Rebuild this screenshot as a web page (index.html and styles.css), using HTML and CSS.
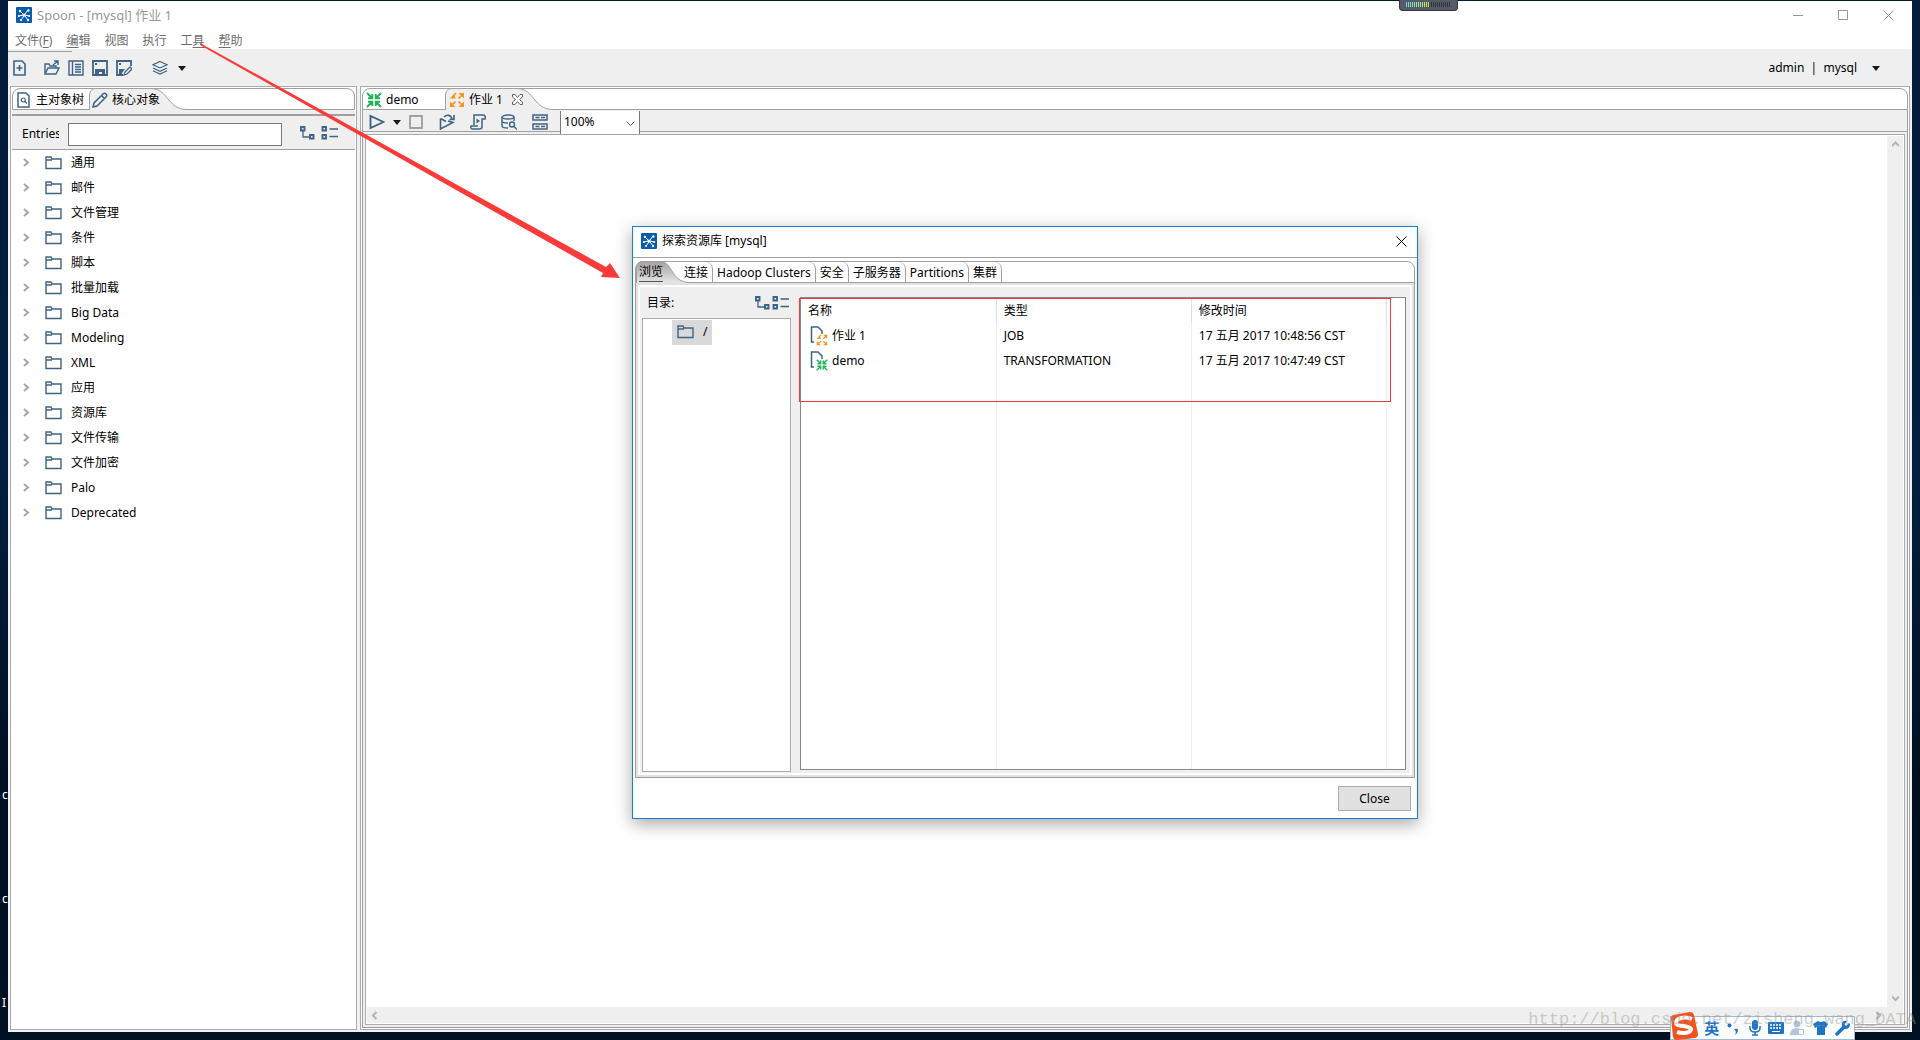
FILE: index.html
```
<!DOCTYPE html>
<html lang="zh-CN">
<head>
<meta charset="utf-8">
<title>Spoon - [mysql] 作业 1</title>
<link rel="stylesheet" href="styles.css">
</head>
<body>
<svg class="sprite" aria-hidden="true">
  <symbol id="logo" viewBox="0 0 16 16"><rect width="16" height="16" rx="1" fill="#0a5cab"/><g stroke="#fff" stroke-width="1" fill="none"><path d="M4 4l3 3M12 3L9 7M3 9l4-1M13 9l-4-1M5 13l3-4M12 13L9 9"/></g><g fill="#fff"><circle cx="8" cy="8" r="1.600"/><circle cx="4" cy="4" r="1.2"/><circle cx="12.300" cy="3.500" r="1.200"/><circle cx="2.800" cy="9" r="1"/><circle cx="13.200" cy="9" r="1"/><circle cx="5" cy="13" r="1.100"/><circle cx="12" cy="13" r="1.200"/></g></symbol>
  <symbol id="folder" viewBox="0 0 17 14"><path d="M1 12.500V1h5l1 2h9v9.500z M1 4h6" fill="none" stroke="#3f6384" stroke-width="1.400"/></symbol>
  <symbol id="chev" viewBox="0 0 7 9"><path d="M1 1l4 3.500-4 3.500" fill="none" stroke="#a6a6a6" stroke-width="2"/></symbol>
  <symbol id="caret" viewBox="0 0 8 5"><path d="M0 0h8L4 5z" fill="#1a1a1a"/></symbol>
  <symbol id="new" viewBox="0 0 16 16"><path d="M2 1h8l3 3v11H2z M7.500 5v6 M4.500 8h6" fill="none" stroke="#3f6384" stroke-width="1.600"/></symbol>
  <symbol id="open" viewBox="0 0 16 16"><path d="M1 14V4h4l1 2h6v2 M1 14l3-6h11l-3 6z M9 5l5-4 M10 1h4v4" fill="none" stroke="#3f6384" stroke-width="1.400"/></symbol>
  <symbol id="list" viewBox="0 0 16 16"><path d="M1 1h14v14H1z M4.500 1v14 M7 4.500h6 M7 7h6 M7 9.500h6 M7 12h6" fill="none" stroke="#3f6384" stroke-width="1.400"/></symbol>
  <symbol id="save" viewBox="0 0 16 16"><path d="M1 1h14v14H1z" fill="none" stroke="#3f6384" stroke-width="1.800"/><path d="M3 9h10v6h-3v-3H7v3H3z M3 3h2v2H3z" fill="#3f6384"/></symbol>
  <symbol id="saveas" viewBox="0 0 16 16"><path d="M7 15H1V1h14v5" fill="none" stroke="#3f6384" stroke-width="1.800"/><path d="M3 9h6l-3 4v2H3z M3 3h2v2H3z" fill="#3f6384"/><path d="M8 15l1-3 5-5 2 2-5 5z" fill="#efefef" stroke="#3f6384" stroke-width="1.300"/></symbol>
  <symbol id="layers" viewBox="0 0 17 16"><path d="M8.500 1l7.500 3.500-7.500 3.500L1 4.500z M1 8l7.500 3.500L16 8 M1 11l7.500 3.500L16 11" fill="none" stroke="#3f6384" stroke-width="1.200"/></symbol>
  <symbol id="docsearch" viewBox="0 0 16 16"><path d="M2 1h8l3 3v11H2z" fill="none" stroke="#3f6384" stroke-width="1.500"/><circle cx="7.300" cy="8" r="2" fill="none" stroke="#3f6384" stroke-width="1.200"/><path d="M9 9.500l2 2" stroke="#3f6384" stroke-width="1.200"/></symbol>
  <symbol id="pencil" viewBox="0 0 16 16"><path d="M1 15l1-4 9-9c1-1 2-1 3 0s1 2 0 3l-9 9z M9.500 3.500l3 3" fill="none" stroke="#3f6384" stroke-width="1.500"/></symbol>
  <symbol id="expand" viewBox="0 0 15 14"><path d="M1 1h3.500v3.500H1z M10 9h3.500v3.500H10z" fill="none" stroke="#3f6384" stroke-width="1.900"/><path d="M3 5v6h6" fill="none" stroke="#3f6384" stroke-width="1.300"/></symbol>
  <symbol id="collapse" viewBox="0 0 17 14"><path d="M1.500 1H5v3.500H1.500z M1.500 9H5v3.500H1.500z" fill="none" stroke="#3f6384" stroke-width="1.900"/><path d="M8.500 3H17M8.500 10.500H17" stroke="#3f6384" stroke-width="1.300"/></symbol>
  <symbol id="trans" viewBox="0 0 16 16"><g fill="none" stroke="#1fb25a" stroke-width="1.900"><path d="M1 1l5 5M6.300 2v4.300H2 M15 1l-5 5M9.700 2v4.300H14 M1 15l5-5M6.300 14V9.700H2 M15 15l-5-5M9.700 14V9.700H14"/></g></symbol>
  <symbol id="job" viewBox="0 0 16 16"><g fill="#f7941d"><path d="M9.500 1H15v5.500z M15 9.500V15H9.500z M6.500 15H1V9.500z M1 6.500L5 2l1.500 4.500z"/></g><path d="M4 4.500L7 1 M9.500 6.500L13 3 M9.500 9.500L13 13 M6.500 9.500L3 13" fill="none" stroke="#f7941d" stroke-width="1.700"/></symbol>
  <symbol id="play" viewBox="0 0 16 16"><path d="M1.500 2v12L14.500 8z" fill="none" stroke="#3f6384" stroke-width="1.900"/></symbol>
  <symbol id="stop" viewBox="0 0 16 16"><path d="M2 2h12v12H2z" fill="none" stroke="#a0a0a0" stroke-width="1.900"/></symbol>
  <symbol id="replay" viewBox="0 0 16 16"><path d="M1.500 4.500V15L14 8.500l-5-1.500 M1.500 4.500L7 7.500 M5 3c3-3 7-2 8 2 M15 1v4.500h-4.500" fill="none" stroke="#3f6384" stroke-width="1.600"/></symbol>
  <symbol id="script" viewBox="0 0 16 16"><path d="M4 11V1h10c1 0 1.500 2 1 4h-3v8c0 2-2 2-3 2H2c-1 0-1.500-2-1-3h7" fill="none" stroke="#3f6384" stroke-width="1.500"/><path d="M6.500 4.500v5L10 7z" fill="#3f6384"/></symbol>
  <symbol id="db" viewBox="0 0 16 16"><g fill="none" stroke="#3f6384" stroke-width="1.400"><ellipse cx="7" cy="3" rx="6" ry="2"/><path d="M1 3v9c0 2 3 2 6 2 M13 3v4 M1 7c0 2 4 2 6 2"/><circle cx="11" cy="10.500" r="2.500"/><path d="M13 12.500l3 3"/></g></symbol>
  <symbol id="grid" viewBox="0 0 16 16"><path d="M1 1h14v5H1z M1 10h14v5H1z" fill="none" stroke="#3f6384" stroke-width="1.500"/><path d="M3.500 3.500h4M9 3.500h4M3.500 12.500h4M9 12.500h4" stroke="#3f6384" stroke-width="1.300"/></symbol>
  <symbol id="doc" viewBox="0 0 18 20"><path d="M4 16H1.500V1H8l4 4v3" fill="none" stroke="#3f6384" stroke-width="1.500"/></symbol>
</svg>

<div class="desktop-text"><span>c</span><span>c</span><span>I</span></div>

<main class="window">
  <header class="titlebar">
    <svg class="i16"><use href="#logo"/></svg>
    <h1>Spoon - [mysql] 作业 1</h1>
    <div class="winbtns">
      <button aria-label="最小化"><svg width="11" height="11"><path d="M0 5.500h10" stroke="#999"/></svg></button>
      <button aria-label="最大化"><svg width="11" height="11"><path d="M.5.5h9v9h-9z" fill="none" stroke="#999"/></svg></button>
      <button aria-label="关闭"><svg width="11" height="11"><path d="M.5.5l10 10M10.500.5l-10 10" stroke="#999"/></svg></button>
    </div>
  </header>
  <nav class="menubar">
    <button>文件(<u>F</u>)</button><button><u>编</u>辑</button><button>视图</button><button>执行</button><button>工<u>具</u></button><button><u>帮</u>助</button>
  </nav>
  <div class="toolbar">
    <button aria-label="新建"><svg class="i16"><use href="#new"/></svg></button>
    <button class="after" aria-label="打开"><svg class="i16"><use href="#open"/></svg></button>
    <button aria-label="探索资源库"><svg class="i16"><use href="#list"/></svg></button>
    <button aria-label="保存"><svg class="i16"><use href="#save"/></svg></button>
    <button aria-label="另存为"><svg class="i16"><use href="#saveas"/></svg></button>
    <button class="layers" aria-label="视角"><svg class="i16"><use href="#layers"/></svg><svg class="caret"><use href="#caret"/></svg></button>
    <button class="user">admin&nbsp; |&nbsp; mysql<svg class="caret"><use href="#caret"/></svg></button>
  </div>

  <div class="panels">
    <aside class="side">
      <div class="tabbar">
        <button class="tab tree-tab"><svg class="i16"><use href="#docsearch"/></svg>主对象树</button>
        <button class="tab active core-tab"><svg class="shape" width="98" height="22"><path class="fill" d="M0 22V7Q1 1 6 .5H62C80 1 78 21.500 98 21.500V22z"/><path class="line" d="M.5 22V7Q1 1 6 .5H62C80 1 78 21.500 98 21.500"/></svg><svg class="i16"><use href="#pencil"/></svg>核心对象</button>
      </div>
      <div class="filter">
        <label for="entries">Entries</label>
        <input id="entries" type="text">
        <button aria-label="展开"><svg class="exp"><use href="#expand"/></svg></button>
        <button aria-label="折叠"><svg class="col"><use href="#collapse"/></svg></button>
      </div>
      <ul class="tree">
        <li><svg class="chev"><use href="#chev"/></svg><svg class="folder"><use href="#folder"/></svg>通用</li>
        <li><svg class="chev"><use href="#chev"/></svg><svg class="folder"><use href="#folder"/></svg>邮件</li>
        <li><svg class="chev"><use href="#chev"/></svg><svg class="folder"><use href="#folder"/></svg>文件管理</li>
        <li><svg class="chev"><use href="#chev"/></svg><svg class="folder"><use href="#folder"/></svg>条件</li>
        <li><svg class="chev"><use href="#chev"/></svg><svg class="folder"><use href="#folder"/></svg>脚本</li>
        <li><svg class="chev"><use href="#chev"/></svg><svg class="folder"><use href="#folder"/></svg>批量加载</li>
        <li><svg class="chev"><use href="#chev"/></svg><svg class="folder"><use href="#folder"/></svg>Big Data</li>
        <li><svg class="chev"><use href="#chev"/></svg><svg class="folder"><use href="#folder"/></svg>Modeling</li>
        <li><svg class="chev"><use href="#chev"/></svg><svg class="folder"><use href="#folder"/></svg>XML</li>
        <li><svg class="chev"><use href="#chev"/></svg><svg class="folder"><use href="#folder"/></svg>应用</li>
        <li><svg class="chev"><use href="#chev"/></svg><svg class="folder"><use href="#folder"/></svg>资源库</li>
        <li><svg class="chev"><use href="#chev"/></svg><svg class="folder"><use href="#folder"/></svg>文件传输</li>
        <li><svg class="chev"><use href="#chev"/></svg><svg class="folder"><use href="#folder"/></svg>文件加密</li>
        <li><svg class="chev"><use href="#chev"/></svg><svg class="folder"><use href="#folder"/></svg>Palo</li>
        <li><svg class="chev"><use href="#chev"/></svg><svg class="folder"><use href="#folder"/></svg>Deprecated</li>
      </ul>
    </aside>

    <section class="editor">
      <div class="tabbar">
        <button class="tab demo-tab"><svg class="i16"><use href="#trans"/></svg>demo</button>
        <button class="tab active job-tab"><svg class="shape" width="108" height="22"><path class="fill" d="M0 22V7Q1 1 6 .5H72C90 1 88 21.500 108 21.500V22z"/><path class="line" d="M.5 22V7Q1 1 6 .5H72C90 1 88 21.500 108 21.500"/></svg><svg class="i16"><use href="#job"/></svg>作业 1<svg class="tabx" width="11" height="11"><path d="M.5.5h2.500l2.500 3 2.500-3h2.500v2.500l-3 2.500 3 2.500v2.500H8l-2.500-3-2.500 3H.5V8l3-2.500-3-2.500z" fill="#fff" stroke="#666"/></svg></button>
      </div>
      <div class="runbar">
        <button aria-label="运行"><svg class="i16"><use href="#play"/></svg><svg class="caret"><use href="#caret"/></svg></button>
        <button aria-label="停止"><svg class="i16"><use href="#stop"/></svg></button>
        <button aria-label="重放"><svg class="i16"><use href="#replay"/></svg></button>
        <button aria-label="SQL"><svg class="i16"><use href="#script"/></svg></button>
        <button aria-label="数据库"><svg class="i16"><use href="#db"/></svg></button>
        <button aria-label="结果"><svg class="i16"><use href="#grid"/></svg></button>
        <span class="zoom"><select aria-label="缩放"><option>100%</option></select><svg width="9" height="6"><path d="M.5.5l4 4 4-4" fill="none" stroke="#555"/></svg></span>
      </div>
      <div class="canvas">
        <div class="sheet"></div>
        <div class="vscroll"><svg width="7" height="9"><path d="M0 6l3.500-3.500L7 6" fill="none" stroke="#b4b4b4" stroke-width="2"/></svg><svg width="7" height="9"><path d="M0 2.500L3.500 6 7 2.500" fill="none" stroke="#b4b4b4" stroke-width="2"/></svg></div>
        <div class="hscroll"><svg width="7" height="9"><path d="M5.500 1L2 4.500 5.500 8" fill="none" stroke="#b4b4b4" stroke-width="2"/></svg><svg width="7" height="9"><path d="M1.500 1L5 4.500 1.500 8" fill="none" stroke="#b4b4b4" stroke-width="2"/></svg></div>
      </div>
    </section>
  </div>
</main>

<section class="dialog" role="dialog" aria-labelledby="dlg-title">
  <header class="dlg-title">
    <svg class="i16"><use href="#logo"/></svg>
    <h2 id="dlg-title">探索资源库 [mysql]</h2>
    <button aria-label="关闭"><svg width="11" height="11"><path d="M.5.5l10 10M10.500.5l-10 10" stroke="#000"/></svg></button>
  </header>
  <div class="book">
    <div class="tabbar">
      <button class="tab active browse-tab"><svg class="shape" width="54" height="22"><defs><linearGradient id="tg" x1="0" y1="0" x2="0" y2="1"><stop offset="0" stop-color="#a2a2a2"/><stop offset="1" stop-color="#e6e6e6"/></linearGradient></defs><path fill="url(#tg)" d="M0 22V7Q1 1 6 .5H24C38 1 34 21.500 54 21.500V22z"/><path class="line" d="M.5 22V7Q1 1 6 .5H24C38 1 34 21.500 54 21.500"/></svg><span>浏览</span></button>
      <button class="tab flat">连接</button><button class="tab flat">Hadoop Clusters</button><button class="tab flat">安全</button><button class="tab flat">子服务器</button><button class="tab flat">Partitions</button><button class="tab flat">集群</button>
    </div>
    <div class="page">
      <div class="dirs">
        <div class="dirs-head"><span>目录:</span><button aria-label="展开"><svg class="exp"><use href="#expand"/></svg></button><button aria-label="折叠"><svg class="col"><use href="#collapse"/></svg></button></div>
        <div class="dirs-box"><button class="root"><svg class="folder"><use href="#folder"/></svg>/</button></div>
      </div>
      <div class="files">
        <table>
          <thead><tr><th>名称</th><th>类型</th><th>修改时间</th></tr></thead>
          <tbody>
            <tr><td><span class="file"><svg width="18" height="20"><use href="#doc"/><use href="#job" x="6" y="8" width="12" height="12"/></svg>作业 1</span></td><td>JOB</td><td>17 五月 2017 10:48:56 CST</td></tr>
            <tr><td><span class="file"><svg width="18" height="20"><use href="#doc"/><use href="#trans" x="6" y="8" width="12" height="12"/></svg>demo</span></td><td>TRANSFORMATION</td><td>17 五月 2017 10:47:49 CST</td></tr>
            <tr class="rest"><td></td><td></td><td></td></tr>
          </tbody>
        </table>
        <div class="mark"></div>
      </div>
    </div>
  </div>
  <footer class="dlg-foot"><button class="close">Close</button></footer>
</section>

<svg class="arrow" width="640" height="290"><path d="M200 43L606 267L610 263L620 278L601 277L603 273L200 45z" fill="#fb3b3a"/></svg>

<div class="meter"><i class="on"></i><i class="off"></i></div>

<div class="ime">
  <svg class="sogou" width="28" height="28" viewBox="0 0 28 28"><path d="M1 6Q1 4 3 3L20 0q3 0 4 3l4 19q0 3-3 4l-18 2q-3 0-4-3z" fill="#f4511e"/><path d="M22 7C15 4 6 6 6 11c0 4 14 2 15 6 0 4-8 5-14 3" fill="none" stroke="#fff" stroke-width="4"/></svg>
  <b>英</b>
  <svg width="16" height="16"><circle cx="3.500" cy="5.500" r="2" fill="#1f74c8"/><path d="M8 9q4-1 4 1 0 3-3 5 2-4-1-6z" fill="#1f74c8"/></svg>
  <svg width="14" height="16"><rect x="4" width="6" height="10" rx="3" fill="#1f74c8"/><path d="M2 6v2q0 4 5 4t5-4V6M7 12v3M4 15h6" fill="none" stroke="#1f74c8" stroke-width="1.500"/></svg>
  <svg width="16" height="14"><rect y="1" width="16" height="12" rx="1" fill="#1f74c8"/><path d="M2 4h12M2 7h12" stroke="#fff" stroke-width="1.500" stroke-dasharray="2 1"/><path d="M4 10.500h8" stroke="#fff"/></svg>
  <svg width="16" height="16"><circle cx="7" cy="4" r="3.500" fill="#b5c3db"/><path d="M0 15q0-7 7-7 5 0 6 7z" fill="#b5c3db"/><path d="M8.500 9.500h5v5h-5z" fill="#fff" stroke="#b5c3db"/></svg>
  <svg width="16" height="16"><path d="M5 1q3 2 6 0l4 3-2 4-1-1v8H4V7L2 8 0 4z" fill="#1f74c8"/></svg>
  <svg width="16" height="16"><path d="M2 14l7-7" stroke="#1f74c8" stroke-width="3.500" stroke-linecap="round"/><path d="M14 3l-3 3-1.500-1.500L12 1q-4-1-5 2-1 5 3 6 5 0 5-5z" fill="#1f74c8"/></svg>
</div>
<div class="watermark">http://blog.csdn.net/zisheng_wang_DATA</div>
</body>
</html>
```
FILE: styles.css
```
* { box-sizing: border-box; }

body {
  margin: 0;
  height: 100vh;
  min-height: 840px;
  padding: 1px 8px 8px;
  position: relative;
  overflow: hidden;
  background: linear-gradient(#011b38, #00203f 45%, #000f24 75%, #001122);
  font: 12px/18px "Noto Sans", "Noto Sans CJK SC", sans-serif;
  color: #000;
}

button {
  font: inherit;
  color: inherit;
  background: none;
  border: 0;
  padding: 0;
  display: flex;
  align-items: center;
}

h1, h2 { margin: 0; font-size: 12px; font-weight: 400; }
svg { display: block; flex: none; }
u { text-underline-offset: 2px; }
.sprite { position: absolute; width: 0; height: 0; }
.i16 { width: 16px; height: 16px; }
.caret { width: 8px; height: 5px; }
.folder { width: 17px; height: 14px; }
.chev { width: 7px; height: 9px; }
.exp { width: 15px; height: 14px; }
.col { width: 17px; height: 14px; }

.desktop-text {
  position: absolute;
  left: 2px;
  top: 786px;
  display: grid;
  gap: 86px;
  color: #fff;
}

/* main window */
.window {
  position: relative;
  height: 100%;
  display: flex;
  flex-direction: column;
  background: #f0f0f0;
}

.titlebar {
  display: flex;
  align-items: center;
  gap: 5px;
  height: 28px;
  padding: 0 18px 0 8px;
  background: #fff;
  color: #999;
}
.titlebar h1 { font-size: 13px; }

.winbtns { margin-left: auto; display: flex; gap: 34px; }

.menubar {
  display: flex;
  gap: 14px;
  height: 20px;
  padding: 3px 7px 0;
  background: #fff;
  color: #6d6d6d;
}

.toolbar {
  display: flex;
  align-items: center;
  gap: 8px;
  height: 37px;
  padding: 1px 32px 0 4px;
  background: #efefef;
}
.toolbar::before {
  content: "";
  position: absolute;
  left: 0;
  top: 50px;
  width: 64px;
  height: 1px;
  background: #a0a0a0;
}
.toolbar .after { margin-left: 8px; }
.toolbar .layers { margin-left: 12px; gap: 10px; }
.toolbar .user { margin-left: auto; gap: 15px; }

.panels {
  flex: 1;
  min-height: 0;
  display: flex;
  gap: 3px;
  padding: 0 2px 2px;
}

.side, .editor {
  display: flex;
  flex-direction: column;
  border: 1px solid #a9abb1;
}
.side { width: 347px; flex: none; background: #fff; }
.editor { flex: 1; min-width: 0; padding: 1px; background: #fff; }

/* tab strips */
.tabbar {
  display: flex;
  flex: none;
  height: 22px;
  border: 1px solid #a0a0a0;
  border-radius: 8px 8px 0 0;
  background: #fff;
}
.side .tabbar { margin: 1px 1px 0; }
.tab {
  position: relative;
  height: 20px;
  padding-top: 1px;
  gap: 4px;
  white-space: nowrap;
}
.tab > :not(.shape) { position: relative; }
.shape { position: absolute; left: 0; top: -1px; }
.shape .fill { fill: #efefef; }
.shape .line, .line { fill: none; stroke: #a0a0a0; }
.tree-tab { width: 76px; padding-left: 3px; }
.core-tab { width: 98px; padding-left: 3px; }
.core-tab, .job-tab { isolation: isolate; }
.core-tab .shape, .job-tab .shape, .browse-tab .shape { z-index: -1; }
.demo-tab { width: 82px; padding-left: 3px; }
.job-tab { width: 108px; padding-left: 4px; }
.tabx { margin-left: 5px; }

.filter {
  display: flex;
  align-items: center;
  height: 40px;
  margin: 0 1px;
  padding: 9px 17px 0 10px;
  background: linear-gradient(#efefef 4px, #a0a0a0 4px, #a0a0a0 6px, #efefef 6px);
  border-bottom: 1px solid #a0a0a0;
}
.filter label { width: 37px; overflow: hidden; }
.filter input {
  width: 214px;
  height: 23px;
  margin: 0 18px 0 9px;
  border: 1px solid #7a7a7a;
  background: #fff;
  font: inherit;
}
.filter button { padding-bottom: 2px; }
.filter button + button { margin-left: 6px; }

.tree { list-style: none; margin: 0; padding: 0 12px; }
.tree li { display: flex; align-items: center; height: 25px; }
.tree .folder { margin: 0 9px 0 15px; }

.runbar {
  display: flex;
  align-items: center;
  height: 24px;
  gap: 15px;
  padding-left: 6px;
  background: #efefef;
  border: solid #a0a0a0;
  border-width: 0 1px;
}
.runbar button { gap: 8px; }
.runbar button:first-child { margin-right: -8px; }
.zoom {
  position: relative;
  width: 80px;
  height: 23px;
  margin-left: -3px;
  background: #fff;
  border: solid #7a7a7a;
  border-width: 0 1px;
}
.zoom select {
  appearance: none;
  width: 100%;
  height: 100%;
  padding: 0 3px;
  border: 0;
  background: none;
  font: inherit;
}
.zoom svg { position: absolute; right: 4px; top: 10px; }

.canvas {
  flex: 1;
  min-height: 0;
  display: grid;
  grid-template: 1fr 16px / 1fr 16px;
  padding: 1px;
  background: #fff;
  border: 1px solid #a9abb1;
  box-shadow: 0 0 0 2px #efefef, 0 0 0 3px #a0a0a0;
  margin: 0 3px 3px;
}
.vscroll, .hscroll {
  display: flex;
  align-items: center;
  justify-content: space-between;
  background: #efefef;
}
.vscroll { flex-direction: column; padding: 4px 0; }
.hscroll { grid-column: 1 / 3; padding: 0 21px 0 4px; }

/* repository explorer */
.dialog {
  position: absolute;
  left: 632px;
  top: 226px;
  width: 786px;
  height: 593px;
  display: flex;
  flex-direction: column;
  background: #fff;
  border: 1px solid #1a7fd0;
  box-shadow: 0 5px 16px rgba(0, 0, 0, .35);
}
.dlg-title {
  display: flex;
  align-items: center;
  gap: 5px;
  height: 31px;
  padding: 0 10px 2px 8px;
  border-bottom: 1px solid #a0a0a0;
}
.dlg-title button { margin-left: auto; }

.book {
  flex: 1;
  min-height: 0;
  display: flex;
  flex-direction: column;
  margin: 3px 2px 0;
}
.browse-tab { width: 44px; padding-left: 3px; isolation: isolate; z-index: 1; }
.browse-tab span { border-bottom: 1px solid #555; }
.flat { padding: 1px 4px 0; border-right: 1px solid #a0a0a0; border-radius: 0 7px 0 0; }

.page {
  flex: 1;
  min-height: 0;
  display: flex;
  gap: 9px;
  padding: 14px 8px 5px 6px;
  background: #efefef;
  border: 1px solid #a0a0a0;
  border-top: 0;
  box-shadow: inset 0 0 0 2px #e2e2e2, inset 0 0 0 4px #fff;
}
.dirs { width: 149px; display: flex; flex-direction: column; }
.dirs-head { display: flex; align-items: center; height: 21px; padding: 0 2px 10px 5px; }
.dirs-head span { margin-right: auto; }
.dirs-head button { margin-left: 2px; }
.dirs-box { flex: 1; padding: 1px 29px; background: #fff; border: 1px solid #a9abb1; }
.root { height: 25px; width: 40px; padding: 0 0 1px 5px; gap: 9px; background: #d9d9d9; }

.files {
  position: relative;
  flex: 1;
  display: flex;
  margin-bottom: 2px;
  padding-right: 18px;
  background: #fff;
  border: 1px solid #828790;
}
table { width: 100%; height: 100%; border-collapse: collapse; table-layout: fixed; }
th, td {
  height: 25px;
  padding: 0 0 0 7px;
  text-align: left;
  font-weight: 400;
  border-right: 1px solid #e6f0fa;
}
th { border-right-color: #e0e0e0; }
.rest td { height: auto; }
.file { display: flex; align-items: center; gap: 4px; padding-left: 2px; height: 25px; }
.mark {
  position: absolute;
  left: -2px;
  top: 0;
  width: 592px;
  height: 104px;
  border: 1px solid #f43b3b;
}

.dlg-foot { height: 40px; padding: 8px 6px; display: flex; justify-content: flex-end; }
.close {
  width: 73px;
  height: 25px;
  justify-content: center;
  background: #e1e1e1;
  border: 1px solid #adadad;
}

/* things floating over the desktop */
.arrow { position: absolute; left: 0; top: 0; pointer-events: none; }

.meter {
  position: absolute;
  left: 1399px;
  top: 0;
  width: 59px;
  height: 11px;
  display: flex;
  padding: 2px 6px 3px;
  background: #565a69;
  border: 1px solid #34343f;
  border-top: 0;
  border-radius: 0 0 4px 4px;
}
.meter i { flex: 1; height: 5px; }
.meter .on { background: repeating-linear-gradient(90deg, transparent 0 1px, #565a69 1px 2px), linear-gradient(90deg, #5fe0d8, #d4f04a); }
.meter .off { background: repeating-linear-gradient(90deg, #34343f 0 1px, #565a69 1px 2px); }

.ime {
  position: absolute;
  right: 65px;
  bottom: 0;
  width: 185px;
  height: 24px;
  display: flex;
  align-items: center;
  justify-content: space-between;
  padding-right: 3px;
  background: #fbfdff;
  border: 1px solid #9db9d6;
  color: #1f74c8;
}
.ime b { font-size: 15px; }
.sogou { margin: -4px 0 0 -1px; }

.watermark {
  position: absolute;
  right: 4px;
  bottom: 8px;
  font: 17px/24px "Liberation Mono", monospace;
  color: rgba(150, 150, 140, .45);
}
```
